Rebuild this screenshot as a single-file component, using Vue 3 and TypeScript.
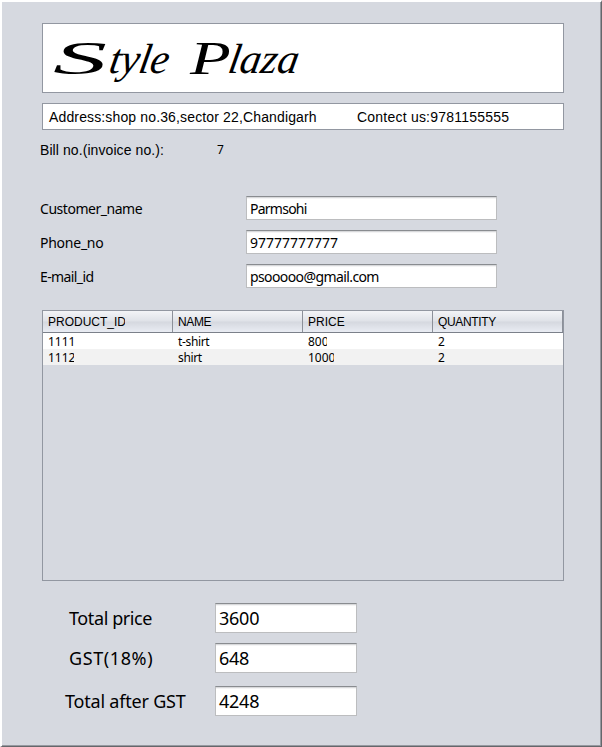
<script setup lang="ts">
interface Field {
  id: string
  label: string
  value: string
}

interface Column {
  key: 'id' | 'name' | 'price' | 'quantity'
  title: string
}

interface Product {
  id: string
  name: string
  price: string
  quantity: string
}

const customer: Field[] = [
  { id: 'customer', label: 'Customer_name', value: 'Parmsohi' },
  { id: 'phone', label: 'Phone_no', value: '97777777777' },
  { id: 'email', label: 'E-mail_id', value: 'psooooo@gmail.com' },
]

const columns: Column[] = [
  { key: 'id', title: 'PRODUCT_ID' },
  { key: 'name', title: 'NAME' },
  { key: 'price', title: 'PRICE' },
  { key: 'quantity', title: 'QUANTITY' },
]

const products: Product[] = [
  { id: '1111', name: 't-shirt', price: '800', quantity: '2' },
  { id: '1112', name: 'shirt', price: '1000', quantity: '2' },
]

const totals: Field[] = [
  { id: 'price', label: 'Total price', value: '3600' },
  { id: 'gst', label: 'GST(18%)', value: '648' },
  { id: 'after', label: 'Total after GST', value: '4248' },
]
</script>

<template>
  <main class="invoice">
    <header class="brand">
      <h1 class="title"><span class="cap cap-s">S</span><span class="word style-word">tyle</span><span class="cap cap-p">P</span><span class="word">laza</span></h1>
    </header>

    <section class="contact">
      <span class="address">Address:shop no.36,sector 22,Chandigarh</span>
      <span class="phone">Contect us:9781155555</span>
    </section>

    <div class="bill">
      <span class="bill-label">Bill no.(invoice no.):</span>
      <span class="bill-value">7</span>
    </div>

    <section class="customer">
      <div v-for="f in customer" :key="f.id" class="row">
        <span class="label"><span :class="`l-${f.id}`">{{ f.label }}</span></span>
        <div class="field"><span :class="`v-${f.id}`">{{ f.value }}</span></div>
      </div>
    </section>

    <section class="table">
      <div class="thead">
        <div v-for="c in columns" :key="c.key" class="th">
          <span :class="`h-${c.key}`">{{ c.title }}</span>
        </div>
      </div>
      <div v-for="p in products" :key="p.id" class="tr">
        <div v-for="c in columns" :key="c.key" class="td">
          <span :class="`c-${c.key}`">{{ p[c.key] }}</span>
        </div>
      </div>
    </section>

    <section class="totals">
      <div v-for="t in totals" :key="t.id" class="total" :class="`t-${t.id}`">
        <span class="total-label">{{ t.label }}</span>
        <div class="field total-field"><span>{{ t.value }}</span></div>
      </div>
    </section>
  </main>
</template>

<style>
body {
  margin: 0;
  background: #d6d9e0;
}
</style>

<style scoped>
.invoice {
  box-sizing: border-box;
  width: 602px;
  height: 747px;
  padding: 21px 36px 0 40px;
  border-style: solid;
  border-width: 2px 1px 1px 2px;
  border-color: #fff #65676b #65676b #fff;
  box-shadow: inset -1px -1px 0 #9699a0;
  background: #d6d9e0;
  color: #000;
  font-family: Tahoma, 'Noto Sans', sans-serif;
  font-size: 14px;
  overflow: hidden;
  white-space: pre;
}

.brand,
.contact {
  box-sizing: border-box;
  width: 522px;
  border: 1px solid #9297a1;
  background: #fff;
}

.brand {
  height: 70px;
}

.title {
  display: flex;
  margin: 0;
  padding: 11px 0 0 10px;
  font: italic 400 42px/48px Vivaldi, 'Liberation Serif', serif;
}

.cap {
  font-size: 46px;
  transform-origin: 0 100%;
}

.cap-s {
  width: 55px;
  transform: scaleX(2.35);
}

.cap-p {
  width: 37px;
  transform: scaleX(1.45);
}

.word {
  transform: skewX(-10deg);
  transform-origin: 0 75%;
}

.style-word {
  width: 82px;
  letter-spacing: -0.4px;
}

.contact {
  display: flex;
  height: 27px;
  margin-top: 10px;
  padding-left: 6px;
  font: 14px/27px 'Liberation Sans', Arial, sans-serif;
}

.address {
  width: 308px;
  letter-spacing: 0.14px;
}

.phone {
  letter-spacing: 0.22px;
}

.bill {
  display: flex;
  height: 20px;
  margin: 10px 0 0 -2px;
  font: 14px/20px 'Liberation Sans', Arial, sans-serif;
}

.bill-label {
  width: 177px;
  letter-spacing: 0.08px;
}

.bill-value {
  font-size: 12px;
  font-family: Tahoma, 'Noto Sans', sans-serif;
}

.customer {
  display: flex;
  flex-direction: column;
  gap: 10px;
  margin: 36px 0 0 -2px;
}

.row {
  display: flex;
  height: 24px;
  line-height: 26px;
}

.label {
  width: 206px;
}

.l-customer {
  letter-spacing: -0.47px;
}

.l-phone {
  letter-spacing: -0.25px;
}

.l-email {
  letter-spacing: -0.6px;
}

.v-customer {
  letter-spacing: -0.75px;
}

.v-email {
  letter-spacing: -0.6px;
}

.field {
  box-sizing: border-box;
  width: 251px;
  height: 24px;
  padding-left: 3px;
  border: 1px solid #bcbdbf;
  border-top-color: #898c90;
  background: #fff;
  box-shadow: inset 0 1px 0 #d8d9db, inset 0 2px 0 #f4f4f5;
  line-height: 24px;
}

.table {
  box-sizing: border-box;
  width: 522px;
  height: 271px;
  margin-top: 22px;
  border: 1px solid #9297a1;
}

.thead {
  display: flex;
  box-sizing: border-box;
  height: 22px;
  border-bottom: 1px solid #7b808a;
  background: linear-gradient(#f3f4f7 0%, #dfe2e8 48%, #d5d8df 52%, #e9ecf3 100%);
  font: 12px/22px 'Liberation Sans', Arial, sans-serif;
}

.th {
  box-sizing: border-box;
  width: 130px;
  padding-left: 5px;
  border-right: 1px solid #8c9099;
}

.tr {
  display: flex;
  height: 16px;
  background: #fff;
  font-size: 12px;
  line-height: 17px;
}

.tr:nth-child(odd) {
  background: #f2f2f2;
}

.td {
  width: 125px;
  padding-left: 5px;
}

.h-id,
.c-id,
.c-price {
  display: inline-block;
  overflow: hidden;
  vertical-align: top;
}

.h-id {
  width: 77px;
}

.h-name,
.h-quantity {
  letter-spacing: -0.35px;
}

.c-id,
.c-price {
  max-width: 26px;
}

.tr:nth-child(2) .c-price {
  max-width: 19px;
}

.c-name {
  letter-spacing: -0.35px;
}

.totals {
  display: flex;
  flex-direction: column;
  gap: 10px;
  margin-top: 22px;
  font-size: 18px;
}

.total {
  display: flex;
  height: 30px;
  padding-left: 27px;
}

.total-label {
  width: 146px;
  line-height: 30px;
  letter-spacing: -0.4px;
}

.t-gst .total-label {
  letter-spacing: 0.6px;
}

.t-after {
  margin-top: 3px;
  padding-left: 23px;
}

.t-after .total-label {
  width: 150px;
  letter-spacing: -0.2px;
}

.total-field {
  width: 142px;
  height: 30px;
  line-height: 28px;
  letter-spacing: -0.25px;
}
</style>
